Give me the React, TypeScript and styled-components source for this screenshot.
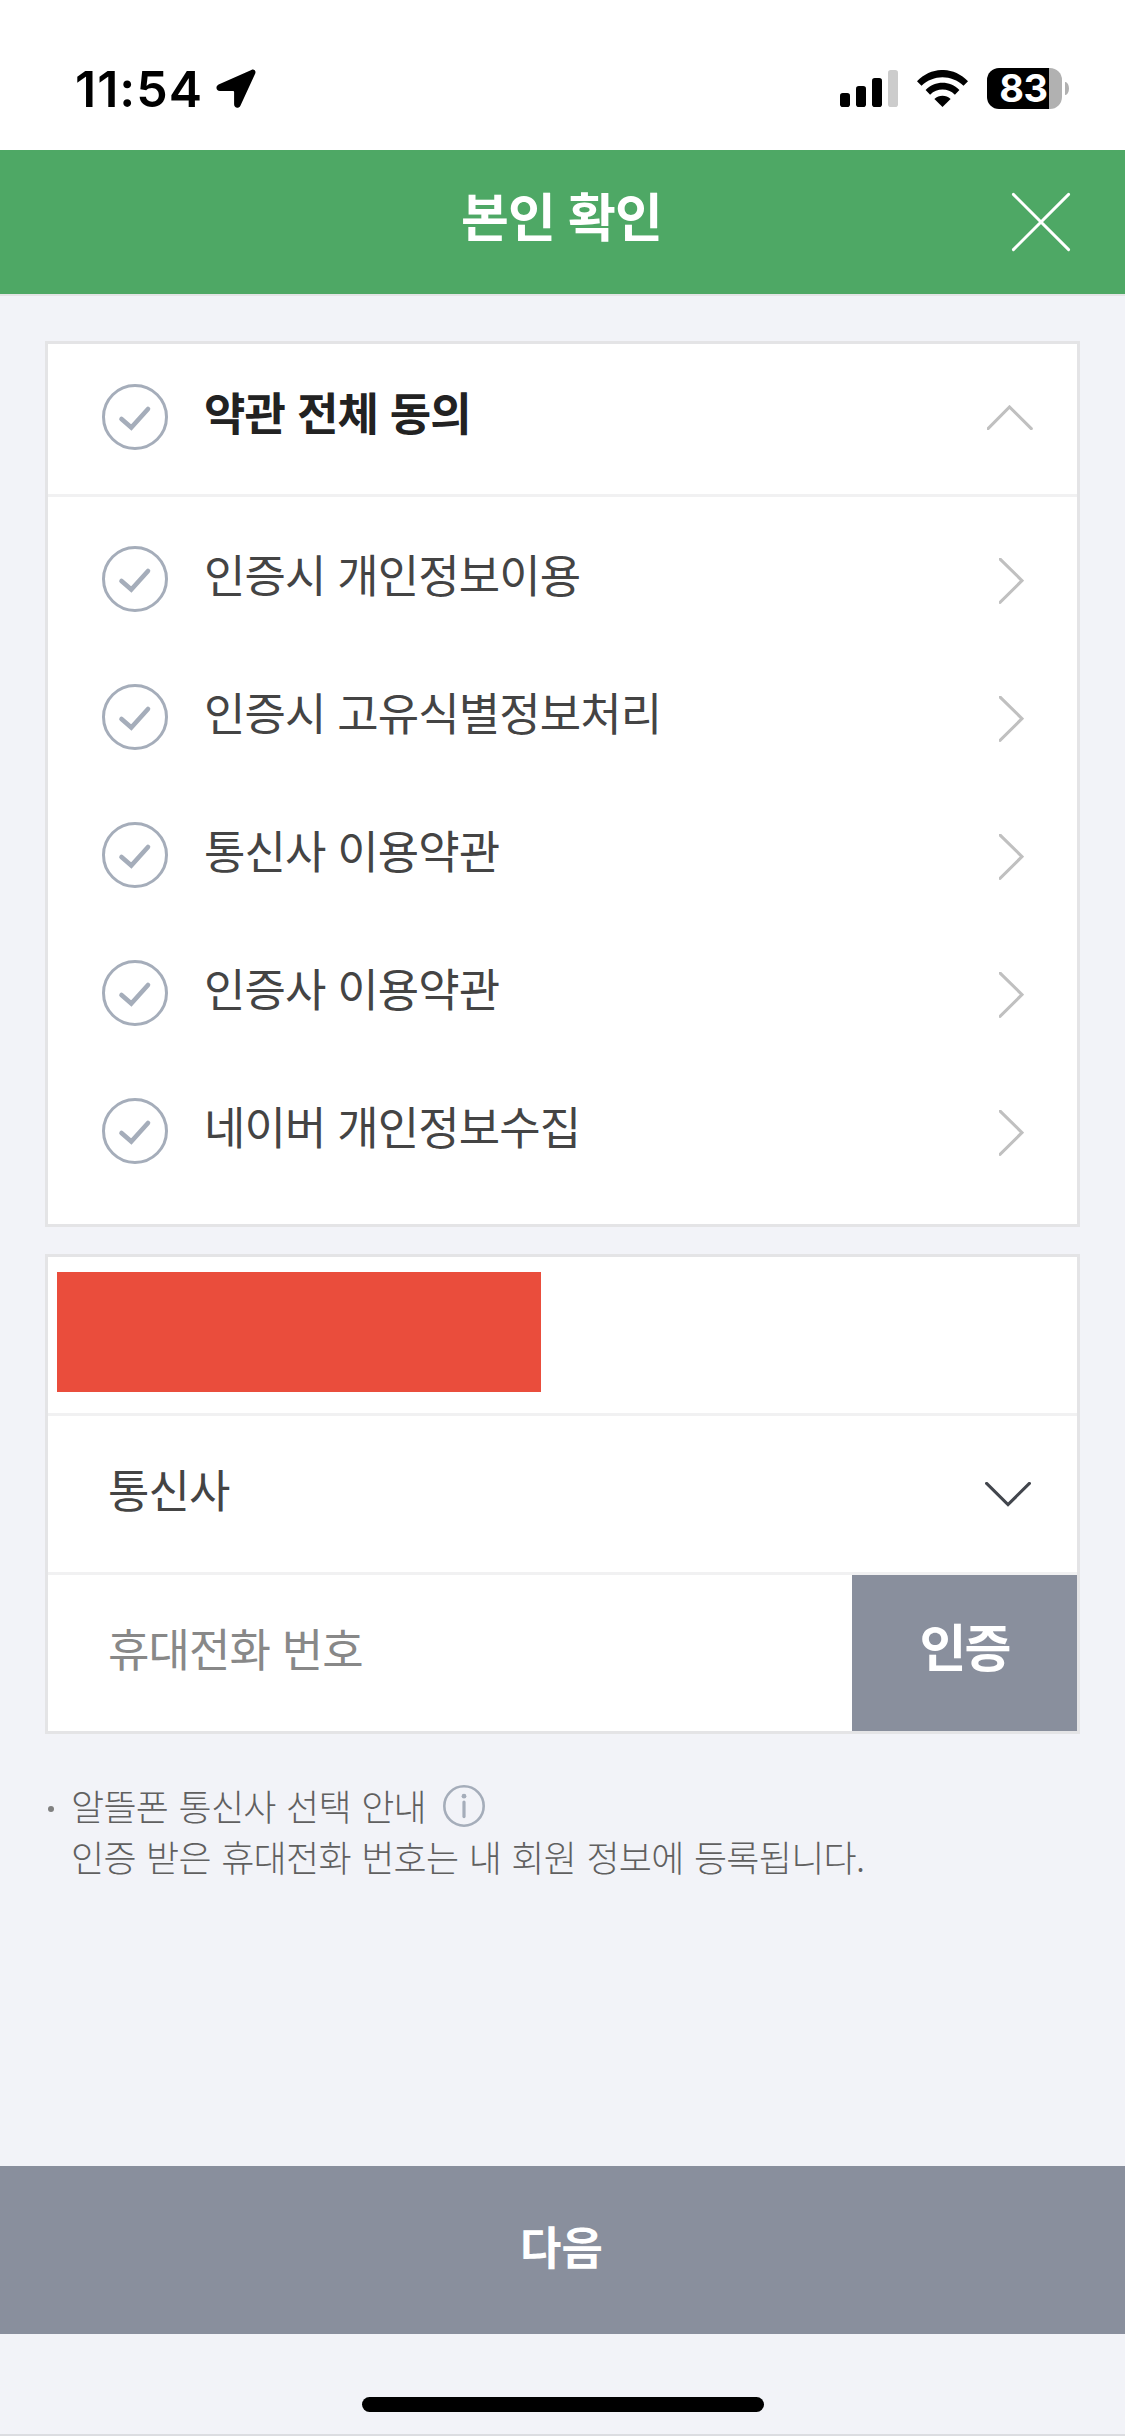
import React from "react";
import styled, { createGlobalStyle } from "styled-components";

const GlobalStyle = createGlobalStyle`
  *, *::before, *::after { box-sizing: border-box; }
  html, body { margin: 0; padding: 0; background: #f2f3f8; }
  button, input { font: inherit; border: 0; padding: 0; margin: 0; background: none; border-radius: 0; }
  svg { display: block; flex: none; }
`;

const Screen = styled.div`
  display: flex;
  flex-direction: column;
  width: 1125px;
  height: 2436px;
  overflow: hidden;
  background: #f2f3f8;
  font-family: "Noto Sans CJK KR", "Noto Sans", sans-serif;
  letter-spacing: -0.9px;
  word-spacing: 2.6px;
  color: #444;
`;

const StatusBar = styled.div`
  display: flex;
  justify-content: space-between;
  height: 150px;
  padding: 68px 56px 0 75px;
  background: #fff;
`;

const StatusLeft = styled.div`
  display: flex;
  gap: 14px;
  height: 42px;
  align-items: center;
`;

const Clock = styled.span`
  width: 127px;
  font: 600 50px/42px Inter, sans-serif;
  letter-spacing: 1px;
  color: #000;
  white-space: nowrap;
`;

const StatusRight = styled.div`
  display: flex;
  height: 41px;
  align-items: center;
`;

const WifiSlot = styled.div`
  margin: 0 19px;
`;

const Battery = styled.div`
  display: flex;
  align-items: center;
  justify-content: center;
  width: 75px;
  height: 41px;
  padding-right: 2px;
  border-radius: 12px;
  background: linear-gradient(90deg, #000 62px, #b1b1b1 62px);
  font: 700 38px/41px Inter, sans-serif;
  letter-spacing: -0.3px;
  color: #fff;
`;

const BatteryTip = styled.div`
  width: 4px;
  height: 13px;
  margin-left: 3px;
  border-radius: 0 4px 4px 0 / 0 7px 7px 0;
  background: #b1b1b1;
`;

const Header = styled.header`
  display: grid;
  grid-template-columns: 1fr auto 1fr;
  align-items: center;
  height: 146px;
  background: #4ea865;
  border-bottom: 2px solid #e4e4e6;
`;

const HeaderTitle = styled.h1`
  grid-column: 2;
  margin: 0;
  padding: 0 2px 15px 0;
  font-size: 52px;
  line-height: 80px;
  font-weight: 700;
  color: #fff;
  letter-spacing: -0.8px;
  word-spacing: 2px;
`;

const CloseButton = styled.button`
  justify-self: end;
  margin-right: 54px;
`;

const Main = styled.main`
  flex: 1;
  display: flex;
  flex-direction: column;
  gap: 27px;
  padding: 45px 45px 0;
`;

const Card = styled.section`
  border: 3px solid #e4e4e6;
  background: #fff;
`;

const AgreeAll = styled.div`
  display: flex;
  align-items: center;
  height: 153px;
  padding: 0 44px 4px 54px;
  border-bottom: 3px solid #f1f1f2;
`;

const Terms = styled.ul`
  list-style: none;
  margin: 0;
  padding: 13px 0 24px;
`;

const TermRow = styled.li`
  display: flex;
  align-items: center;
  height: 138px;
  padding: 0 53px 0 54px;

  & > svg:last-child { margin-top: 3px; }
`;

const Label = styled.span<{ $strong?: boolean }>`
  flex: 1;
  margin-left: 36px;
  padding-bottom: 10px;
  font-size: 45px;
  line-height: 66px;
  font-weight: ${(p) => (p.$strong ? 700 : 400)};
  color: ${(p) => (p.$strong ? "#222" : "#444")};
  white-space: nowrap;
`;

const Field = styled.div`
  display: flex;
  align-items: center;
  height: 159px;
  padding: 0 46px 0 60px;
  border-bottom: 3px solid #f1f1f2;
`;

const NameField = styled(Field)`
  align-items: flex-start;
  padding: 15px 0 0 9px;
`;

const Redaction = styled.div`
  width: 484px;
  height: 120px;
  background: #ea4d3c;
`;

const PhoneField = styled(Field)`
  height: 156px;
  padding-right: 0;
  border-bottom: 0;
`;

const Value = styled.span`
  flex: 1;
  padding-bottom: 10px;
  font-size: 45px;
  line-height: 66px;
`;

const PhoneInput = styled.input`
  flex: 1;
  min-width: 0;
  height: 66px;
  margin-bottom: 11px;
  font-size: 45px;
  letter-spacing: -0.9px;
  word-spacing: 2.6px;
  outline: none;
  &::placeholder { color: #888; opacity: 1; }
`;

const VerifyButton = styled.button`
  width: 225px;
  height: 156px;
  padding-bottom: 16px;
  background: #898f9d;
  color: #fff;
  font-size: 51px;
  font-weight: 700;
  letter-spacing: -1.8px;
`;

const Notes = styled.div`
  display: flex;
  gap: 17px;
  margin-top: 19px;
  margin-left: 3px;
  font-size: 36px;
  line-height: 51px;
  font-weight: 300;
  color: #606060;
  letter-spacing: -0.7px;
  word-spacing: 3px;
`;

const Bullet = styled.i`
  width: 6px;
  height: 6px;
  margin-top: 26px;
  border-radius: 50%;
  background: #808080;
`;

const NoteLine = styled.p`
  display: flex;
  align-items: center;
  gap: 17px;
  height: 51px;
  margin: 0;
  white-space: nowrap;
`;

const NextButton = styled.button`
  height: 168px;
  padding: 0 2px 9px 0;
  background: #898f9d;
  color: #fff;
  font-size: 45px;
  font-weight: 700;
  letter-spacing: 0;
`;

const HomeArea = styled.footer`
  display: flex;
  justify-content: center;
  height: 102px;
  padding-top: 63px;
  border-bottom: 2px solid #dcdde1;
`;

const HomeIndicator = styled.div`
  width: 402px;
  height: 15px;
  border-radius: 8px;
  background: #000;
`;

const LocationIcon = () => (
  <svg width="40" height="40" viewBox="0 0 40 40">
    <path d="M35.4 .9 2.6 15.5C-.8 17.2 0 21.9 4 21.9H17.1Q18.1 21.9 18.1 23V35.3C18.1 39.3 22.7 40 24.4 36.8L39 5C40.5 1.9 38.2-.3 35.4.9Z" fill="#000" />
  </svg>
);

const SignalIcon = () => (
  <svg width="58" height="37" viewBox="0 0 58 37">
    <rect x="0" y="23" width="10" height="14" rx="2.8" />
    <rect x="16" y="16" width="10" height="21" rx="2.8" />
    <rect x="32" y="8" width="10" height="29" rx="2.8" />
    <rect x="48" y="0" width="10" height="37" rx="2.8" fill="#ccc" />
  </svg>
);

const WifiIcon = () => (
  <svg width="51" height="37" viewBox="0 0 51 37">
    <path d="M0 11.3C14.3-3.8 36.7-3.8 51 11.3L46.5 15.8C34.5 4.3 16.5 4.3 4.5 15.8Z" />
    <path d="M8.6 20C18.1 10.3 32.9 10.3 42.4 20L37.9 24.7C30.7 17.9 20.3 17.9 13.1 24.7Z" />
    <path d="M17.4 28.9C22 24.7 29 24.7 33.6 28.9L25.5 37Z" />
  </svg>
);

const CloseIcon = () => (
  <svg width="60" height="60" viewBox="0 0 60 60" fill="none" stroke="#fff" strokeWidth="2.9" strokeLinecap="round">
    <path d="M2.4 2.4 57.6 57.6M57.6 2.4 2.4 57.6" />
  </svg>
);

const CheckIcon = () => (
  <svg width="66" height="66" viewBox="0 0 66 66" fill="none" stroke="#a5adba">
    <circle cx="33" cy="33" r="31.5" strokeWidth="3" />
    <path d="M19.5 35 29.3 43.6 46 25" strokeWidth="4.6" strokeLinecap="round" strokeLinejoin="miter" />
  </svg>
);

const chevrons = {
  up: { w: 46, h: 25, d: "M1 23.6 22.5 2 44.3 23.6" },
  right: { w: 25, h: 46, d: "M1 1 23 22.6 1 44.4" },
  down: { w: 46, h: 25, d: "M1.6 1.4 23 22.6 44.4 1.4" },
};

const Chevron = ({ dir, color = "#c0c0c0" }: { dir: keyof typeof chevrons; color?: string }) => {
  const c = chevrons[dir];
  return (
    <svg width={c.w} height={c.h} viewBox={`0 0 ${c.w} ${c.h}`} fill="none" stroke={color} strokeWidth="3.1">
      <path d={c.d} strokeLinecap="round" />
    </svg>
  );
};

const InfoIcon = () => (
  <svg width="42" height="42" viewBox="0 0 42 42">
    <circle cx="21" cy="21" r="19.7" fill="none" stroke="#a5adba" strokeWidth="2.6" />
    <circle cx="21" cy="11.2" r="2.4" fill="#a5adba" />
    <path d="M21 17V31.6" stroke="#a5adba" strokeWidth="3.2" strokeLinecap="round" />
  </svg>
);

const terms = [
  "인증시 개인정보이용",
  "인증시 고유식별정보처리",
  "통신사 이용약관",
  "인증사 이용약관",
  "네이버 개인정보수집",
];

export default function App() {
  return (
    <Screen>
      <GlobalStyle />
      <StatusBar>
        <StatusLeft>
          <Clock>11:54</Clock>
          <LocationIcon />
        </StatusLeft>
        <StatusRight>
          <SignalIcon />
          <WifiSlot>
            <WifiIcon />
          </WifiSlot>
          <Battery>83</Battery>
          <BatteryTip />
        </StatusRight>
      </StatusBar>
      <Header>
        <HeaderTitle>본인 확인</HeaderTitle>
        <CloseButton aria-label="닫기">
          <CloseIcon />
        </CloseButton>
      </Header>
      <Main>
        <Card>
          <AgreeAll>
            <CheckIcon />
            <Label $strong>약관 전체 동의</Label>
            <Chevron dir="up" />
          </AgreeAll>
          <Terms>
            {terms.map((term) => (
              <TermRow key={term}>
                <CheckIcon />
                <Label>{term}</Label>
                <Chevron dir="right" />
              </TermRow>
            ))}
          </Terms>
        </Card>
        <Card>
          <NameField>
            <Redaction />
          </NameField>
          <Field>
            <Value>통신사</Value>
            <Chevron dir="down" color="#42464d" />
          </Field>
          <PhoneField>
            <PhoneInput placeholder="휴대전화 번호" />
            <VerifyButton>인증</VerifyButton>
          </PhoneField>
        </Card>
        <Notes>
          <Bullet />
          <div>
            <NoteLine>
              알뜰폰 통신사 선택 안내
              <InfoIcon />
            </NoteLine>
            <NoteLine>인증 받은 휴대전화 번호는 내 회원 정보에 등록됩니다.</NoteLine>
          </div>
        </Notes>
      </Main>
      <NextButton>다음</NextButton>
      <HomeArea>
        <HomeIndicator />
      </HomeArea>
    </Screen>
  );
}
